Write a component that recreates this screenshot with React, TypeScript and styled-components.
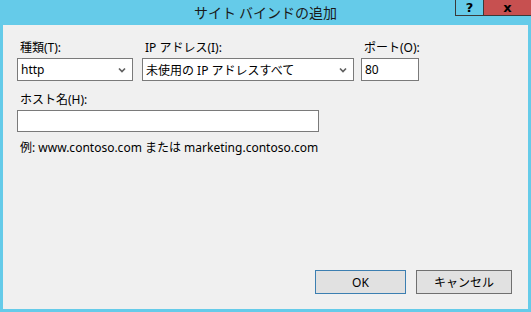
import React from 'react';
import styled, { createGlobalStyle } from 'styled-components';

const GlobalStyle = createGlobalStyle`
  html, body {
    margin: 0;
    padding: 0;
    background: #65cbe9;
  }
  body {
    font-family: 'Noto Sans', 'Noto Sans CJK JP', sans-serif;
    font-size: 12px;
    color: #000000;
  }
`;

const Window = styled.div`
  width: 531px;
  height: 312px;
  display: flex;
  flex-direction: column;
  background: #65cbe9;
`;

const TitleBar = styled.div`
  height: 25px;
  display: grid;
  grid-template-columns: 1fr auto 1fr;
`;

const Title = styled.div`
  grid-column: 2;
  font-family: 'Noto Sans CJK JP', sans-serif;
  font-size: 14px;
  line-height: 25px;
  color: #1a1a1a;
`;

const Controls = styled.div`
  grid-column: 3;
  justify-self: end;
  align-self: start;
  display: flex;
`;

const CtrlButton = styled.div<{ $close?: boolean }>`
  height: 15px;
  width: ${(p) => (p.$close ? '47px' : '27px')};
  border-bottom: 1px solid #3a3a3a;
  border-left: ${(p) => (p.$close ? 'none' : '1px solid #3a3a3a')};
  border-right: ${(p) => (p.$close ? 'none' : '1px solid #3a3a3a')};
  background: ${(p) => (p.$close ? '#c75050' : 'transparent')};
  display: flex;
  align-items: center;
  justify-content: center;
  font-family: 'DejaVu Sans', sans-serif;
  font-weight: bold;
  font-size: 13px;
  line-height: 15px;
  color: #000;
`;

const Client = styled.div`
  flex: 1;
  margin: 0 3px 3px 3px;
  background: #f0f0f0;
  padding: 15px 16px 15px 14px;
  box-sizing: border-box;
  display: flex;
  flex-direction: column;
`;

const FieldRow = styled.div`
  display: flex;
  gap: 9px;
`;

const Field = styled.div<{ $w: number; $ml?: number; $mt?: number }>`
  width: ${(p) => p.$w}px;
  margin-left: ${(p) => p.$ml ?? 0}px;
  margin-top: ${(p) => p.$mt ?? 0}px;
  display: flex;
  flex-direction: column;
`;

const Label = styled.div`
  padding-left: 3px;
  line-height: 16px;
  margin-bottom: 2px;
  white-space: nowrap;
`;

const Box = styled.div<{ $h?: number }>`
  height: ${(p) => p.$h ?? 23}px;
  box-sizing: border-box;
  border: 1px solid #7a7a7a;
  background: #ffffff;
  display: flex;
  align-items: center;
  padding: 0 6px 0 3px;
  white-space: nowrap;
`;

const BoxText = styled.span`
  flex: 1;
`;

const Hint = styled.div`
  margin-top: 7px;
  padding-left: 3px;
  line-height: 17px;
`;

const Spacer = styled.div`
  flex: 1;
`;

const ButtonRow = styled.div`
  display: flex;
  justify-content: flex-end;
  gap: 10px;
`;

const Button = styled.div<{ $w: number; $default?: boolean }>`
  width: ${(p) => p.$w}px;
  height: 24px;
  box-sizing: border-box;
  border: 1px solid ${(p) => (p.$default ? '#3c7fb1' : '#707070')};
  background: #e1e1e1;
  display: flex;
  align-items: center;
  justify-content: center;
`;

const Chevron = () => (
  <svg width="8" height="6" viewBox="0 0 8 6">
    <path d="M1 1.5 L4 4.5 L7 1.5" stroke="#606060" strokeWidth="1.7" fill="none" />
  </svg>
);

const Select = ({ value }: { value: string }) => (
  <Box>
    <BoxText>{value}</BoxText>
    <Chevron />
  </Box>
);

export default function App() {
  return (
    <Window>
      <GlobalStyle />
      <TitleBar>
        <Title>サイト バインドの追加</Title>
        <Controls>
          <CtrlButton>?</CtrlButton>
          <CtrlButton $close>x</CtrlButton>
        </Controls>
      </TitleBar>
      <Client>
        <FieldRow>
          <Field $w={116}>
            <Label>種類(T):</Label>
            <Select value="http" />
          </Field>
          <Field $w={212}>
            <Label>IP アドレス(I):</Label>
            <Select value="未使用の IP アドレスすべて" />
          </Field>
          <Field $w={58} $ml={-2}>
            <Label>ポート(O):</Label>
            <Box>80</Box>
          </Field>
        </FieldRow>
        <Field $w={302} $mt={11}>
          <Label>ホスト名(H):</Label>
          <Box $h={22} />
        </Field>
        <Hint>例: www.contoso.com または marketing.contoso.com</Hint>
        <Spacer />
        <ButtonRow>
          <Button $w={91} $default>OK</Button>
          <Button $w={96}>キャンセル</Button>
        </ButtonRow>
      </Client>
    </Window>
  );
}
